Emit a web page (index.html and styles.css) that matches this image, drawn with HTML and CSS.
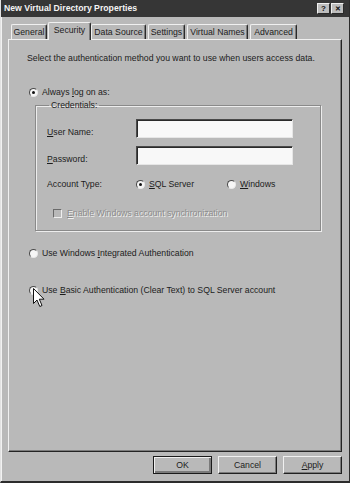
FILE: index.html
```html
<!DOCTYPE html>
<html>
<head>
<meta charset="utf-8">
<link rel="stylesheet" href="styles.css">
</head>
<body>
<div class="window">
  <div class="titlebar">
    <span class="title">New Virtual Directory Properties</span>
    <div class="tb-buttons">
      <span class="tb-btn">?</span>
      <span class="tb-btn tb-close">&#x2715;</span>
    </div>
  </div>
  <div class="tabs">
    <div class="tab tab-general">General</div>
    <div class="tab tab-security active">Security</div>
    <div class="tab tab-data">Data Source</div>
    <div class="tab tab-settings">Settings</div>
    <div class="tab tab-vnames">Virtual Names</div>
    <div class="tab tab-adv">Advanced</div>
  </div>
  <div class="panel">
    <p class="intro">Select the authentication method you want to use when users access data.</p>
    <div class="opt opt-always"><span class="radio checked"></span><span>Always <u>l</u>og on as:</span></div>
    <fieldset class="group">
      <legend>Credentials:</legend>
      <div class="field"><span class="label"><u>U</u>ser Name:</span><span class="textbox"></span></div>
      <div class="field field-pw"><span class="label"><u>P</u>assword:</span><span class="textbox"></span></div>
      <div class="acct">
        <span class="label">Account Type:</span>
        <span class="choice choice-sql"><span class="radio checked"></span><span><u>S</u>QL Server</span></span>
        <span class="choice"><span class="radio"></span><span><u>W</u>indows</span></span>
      </div>
      <div class="check"><span class="checkbox"></span><span class="dis-text"><u>E</u>nable Windows account synchronization</span></div>
    </fieldset>
    <div class="opt opt-win"><span class="radio"></span><span>Use Windows <u>I</u>ntegrated Authentication</span></div>
    <div class="opt opt-basic"><span class="radio"></span><span>Use <u>B</u>asic Authentication (Clear Text) to SQL Server account</span>
      <svg class="cursor" width="13" height="20" viewBox="0 0 13 20"><path d="M0.5 0.5 L0.5 15.5 L4 12 L6.8 18.5 L9 17.5 L6.3 11.2 L11 11.2 Z" fill="#fff" stroke="#111" stroke-width="1" stroke-linejoin="miter"/></svg>
    </div>
  </div>
  <div class="footer">
    <button class="btn btn-default">OK</button>
    <button class="btn">Cancel</button>
    <button class="btn"><u>A</u>pply</button>
  </div>
</div>
</body>
</html>
```

FILE: styles.css
```css
* { box-sizing: border-box; }
html, body { margin: 0; padding: 0; background: #b9b9b9; }
body {
  font-family: "Liberation Sans", Arial, sans-serif;
  font-size: 8.7px;
  color: #1c1c1c;
}
u { text-decoration: underline; text-underline-offset: 1px; }

.window {
  width: 350px;
  height: 483px;
  background: #b9b9b9;
  border-left: 1px solid #e2e2e2;
  border-right: 1px solid #2c2c2c;
  border-bottom: 2px solid #2c2c2c;
  box-shadow: inset 1px 0 0 #f2f2f2;
}

.titlebar {
  height: 17px;
  background: #363636;
  display: flex;
  align-items: center;
  justify-content: space-between;
  padding: 0 5px 0 3px;
}
.title {
  color: #f4f4f4;
  font-weight: bold;
  font-size: 8.7px;
  line-height: 11px;
}
.tb-buttons { display: flex; gap: 1px; }
.tb-btn {
  width: 13px;
  height: 11px;
  background: #bdbdbd;
  border: 1px solid;
  border-color: #f0f0f0 #2a2a2a #2a2a2a #f0f0f0;
  font-size: 8px;
  font-weight: bold;
  line-height: 9px;
  text-align: center;
  color: #111;
}
.tb-close { font-size: 7px; }

.tabs {
  display: flex;
  align-items: flex-end;
  margin-top: 5px;
  padding-left: 10px;
  height: 17px;
}
.tab {
  height: 15px;
  line-height: 15px;
  text-align: center;
  background: #b9b9b9;
  border-top: 1px solid #f0f0f0;
  border-left: 1px solid #f0f0f0;
  border-right: 1px solid #2a2a2a;
  border-top-left-radius: 2px;
  border-top-right-radius: 2px;
  box-shadow: inset -1px 0 0 #7a7a7a;
  margin-right: 2px;
}
.tab-general { width: 36px; margin-right: 1px; }
.tab-security { width: 43px; margin-right: 0; }
.tab-data { width: 55px; }
.tab-settings { width: 37px; }
.tab-vnames { width: 61px; }
.tab-adv { width: 47px; }
.tab.active {
  height: 18px;
  margin-bottom: -1px;
  line-height: 15px;
  position: relative;
  z-index: 1;
}

.panel {
  margin-left: 7px;
  width: 334px;
  height: 413px;
  border-top: 1px solid #f0f0f0;
  border-left: 1px solid #f0f0f0;
  border-right: 1px solid #242424;
  border-bottom: 1px solid #242424;
  box-shadow: inset -1px -1px 0 #7c7c7c;
  padding-top: 13px;
}

.intro {
  margin: 0 0 0 18px;
  line-height: 11px;
}

.opt {
  display: flex;
  align-items: center;
  height: 11px;
  line-height: 11px;
  padding-left: 20px;
  gap: 4px;
}
.opt-always { margin-top: 23px; }
.opt-win { margin-top: 17px; }
.opt-basic { margin-top: 26px; position: relative; }
.cursor { position: absolute; left: 24px; top: 3px; }

.radio {
  width: 9px;
  height: 9px;
  flex: none;
  border-radius: 50%;
  background: #f6f6f6;
  border: 1px solid;
  border-color: #4a4a4a #e8e8e8 #e8e8e8 #4a4a4a;
  display: flex;
  align-items: center;
  justify-content: center;
}
.radio.checked::after {
  content: "";
  width: 3px;
  height: 3px;
  border-radius: 50%;
  background: #111;
}

.group {
  margin: 2px 0 0 26px;
  width: 286px;
  padding: 8px 0 12px 11px;
  border: 1px solid #8a8a8a;
  box-shadow: inset 1px 1px 0 #ededed, 1px 1px 0 #ededed;
  min-width: 0;
}
.group legend {
  padding: 0 2px;
  margin-left: 2px;
  line-height: 11px;
}

.field {
  display: flex;
  align-items: flex-end;
  height: 19px;
}
.field-pw { margin-top: 8px; }
.label { width: 89px; flex: none; line-height: 11px; }
.textbox {
  width: 157px;
  height: 19px;
  background: #f8f8f8;
  border: 1px solid;
  border-color: #4a4a4a #e6e6e6 #e6e6e6 #4a4a4a;
  box-shadow: inset 1px 1px 0 #2a2a2a;
}

.acct {
  display: flex;
  align-items: center;
  margin-top: 14px;
  height: 11px;
  line-height: 11px;
}
.choice { display: flex; align-items: center; gap: 4px; }
.choice-sql { width: 91px; }

.check {
  display: flex;
  align-items: center;
  gap: 5px;
  margin-top: 19px;
  padding-left: 6px;
  height: 9px;
  line-height: 11px;
}
.checkbox {
  width: 9px;
  height: 9px;
  flex: none;
  background: #b9b9b9;
  border: 1px solid;
  border-color: #6a6a6a #efefef #efefef #6a6a6a;
}
.dis-text {
  color: #8c8c8c;
  text-shadow: 1px 1px 0 #f0f0f0;
}

.footer {
  display: flex;
  justify-content: flex-end;
  gap: 6px;
  margin-top: 4px;
  padding-right: 7px;
}
.btn {
  width: 59px;
  height: 18px;
  padding: 0;
  font-family: "Liberation Sans", Arial, sans-serif;
  font-size: 8.7px;
  color: #1c1c1c;
  background: #b9b9b9;
  border: 1px solid;
  border-color: #f0f0f0 #202020 #202020 #f0f0f0;
  box-shadow: inset -1px -1px 0 #7a7a7a;
}
.btn-default {
  border: 1px solid #1a1a1a;
  box-shadow: inset 1px 1px 0 #f0f0f0, inset -2px -2px 0 #7a7a7a;
}
```
